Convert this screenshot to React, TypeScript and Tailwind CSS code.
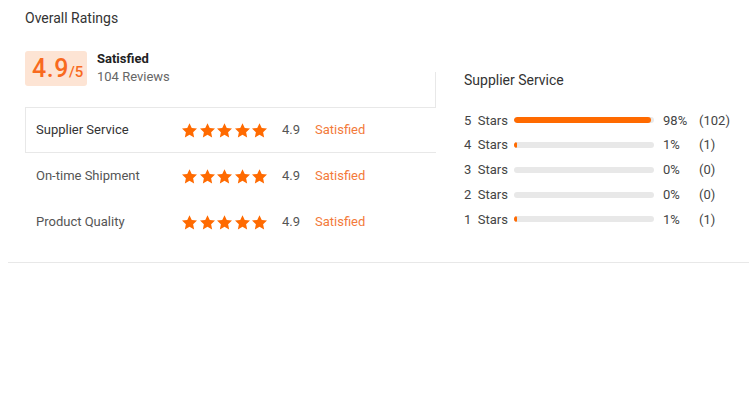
import React from 'react';

const ROWS = [
  { label: 'Supplier Service', score: '4.9', active: true },
  { label: 'On-time Shipment', score: '4.9', active: false },
  { label: 'Product Quality', score: '4.9', active: false },
];

const DIST = [
  { stars: 5, pct: 98, count: 102 },
  { stars: 4, pct: 1, count: 1 },
  { stars: 3, pct: 0, count: 0 },
  { stars: 2, pct: 0, count: 0 },
  { stars: 1, pct: 1, count: 1 },
];

function Star() {
  return (
    <svg width="15" height="15" viewBox="1 1 22 22" className="shrink-0">
      <path
        d="M12 1.2l3.3 7.1 7.7.9-5.7 5.3 1.5 7.7L12 18.3l-6.8 3.9 1.5-7.7L1 9.2l7.7-.9z"
        fill="#ff6a00"
      />
    </svg>
  );
}

export default function App() {
  return (
    <div className="w-[750px] h-[400px] bg-white font-['Roboto',sans-serif]">
      <div className="ml-2 mr-[1px] pl-[17px] pt-2 pb-[17px] border-b border-[#e8e8e8]">
        <div className="text-[14px] leading-5 text-[#333]">Overall Ratings</div>

        <div className="mt-[22px] flex items-start">
          {/* left: overall score + per-dimension rows */}
          <div className="w-[411px] shrink-0">
            <div className="flex items-center">
              <div className="w-[62px] h-[35px] rounded-[3px] bg-[#fde4d4] flex items-baseline pl-[7px] pt-[3px] text-[#f86a1e]">
                <span className="text-[25px] leading-[30px] font-medium tracking-[0.5px]">4.9</span>
                <span className="text-[15px] leading-[30px] font-medium">/5</span>
              </div>
              <div className="ml-[10px] flex flex-col">
                <span className="text-[13px] leading-[18px] font-bold text-[#222]">Satisfied</span>
                <span className="text-[13px] leading-[18px] text-[#666]">104 Reviews</span>
              </div>
            </div>

            <div className="mt-[21px] flex flex-col">
              {ROWS.map((r) => (
                <div
                  key={r.label}
                  className={`relative z-10 h-[46px] flex items-center pl-[11px] bg-white text-[13px] ${
                    r.active ? 'border border-r-0 border-[#e8e8e8]' : ''
                  }`}
                >
                  <span className={`w-[146px] ${r.active ? 'text-[#333] -ml-px' : 'text-[#555]'}`}>
                    {r.label}
                  </span>
                  <div className="flex gap-[2.5px]">
                    <Star />
                    <Star />
                    <Star />
                    <Star />
                    <Star />
                  </div>
                  <span className="ml-[15px] w-[33px] text-[#555]">{r.score}</span>
                  <span className="text-[#f37a3a]">Satisfied</span>
                </div>
              ))}
            </div>
          </div>

          {/* right: star distribution */}
          <div className="-ml-px mt-[22px] h-[173px] w-[300px] border-l border-[#e8e8e8] pl-[28px]">
            <div className="text-[14px] leading-4 text-[#333]">Supplier Service</div>
            <div className="mt-5 flex flex-col">
              {DIST.map((d) => (
                <div key={d.stars} className="h-[24.75px] flex items-center text-[13px] text-[#444]">
                  <span className="w-[50px] whitespace-pre">{`${d.stars}  Stars`}</span>
                  <div className="w-[140px] h-[6px] rounded-full bg-[#e8e8e8] overflow-hidden">
                    <div
                      className="h-full rounded-full bg-[#ff6a00]"
                      style={{ width: d.pct === 0 ? 0 : `${Math.max(d.pct, 2)}%` }}
                    />
                  </div>
                  <span className="ml-[9px] w-[36px]">{d.pct}%</span>
                  <span>({d.count})</span>
                </div>
              ))}
            </div>
          </div>
        </div>
      </div>
    </div>
  );
}
